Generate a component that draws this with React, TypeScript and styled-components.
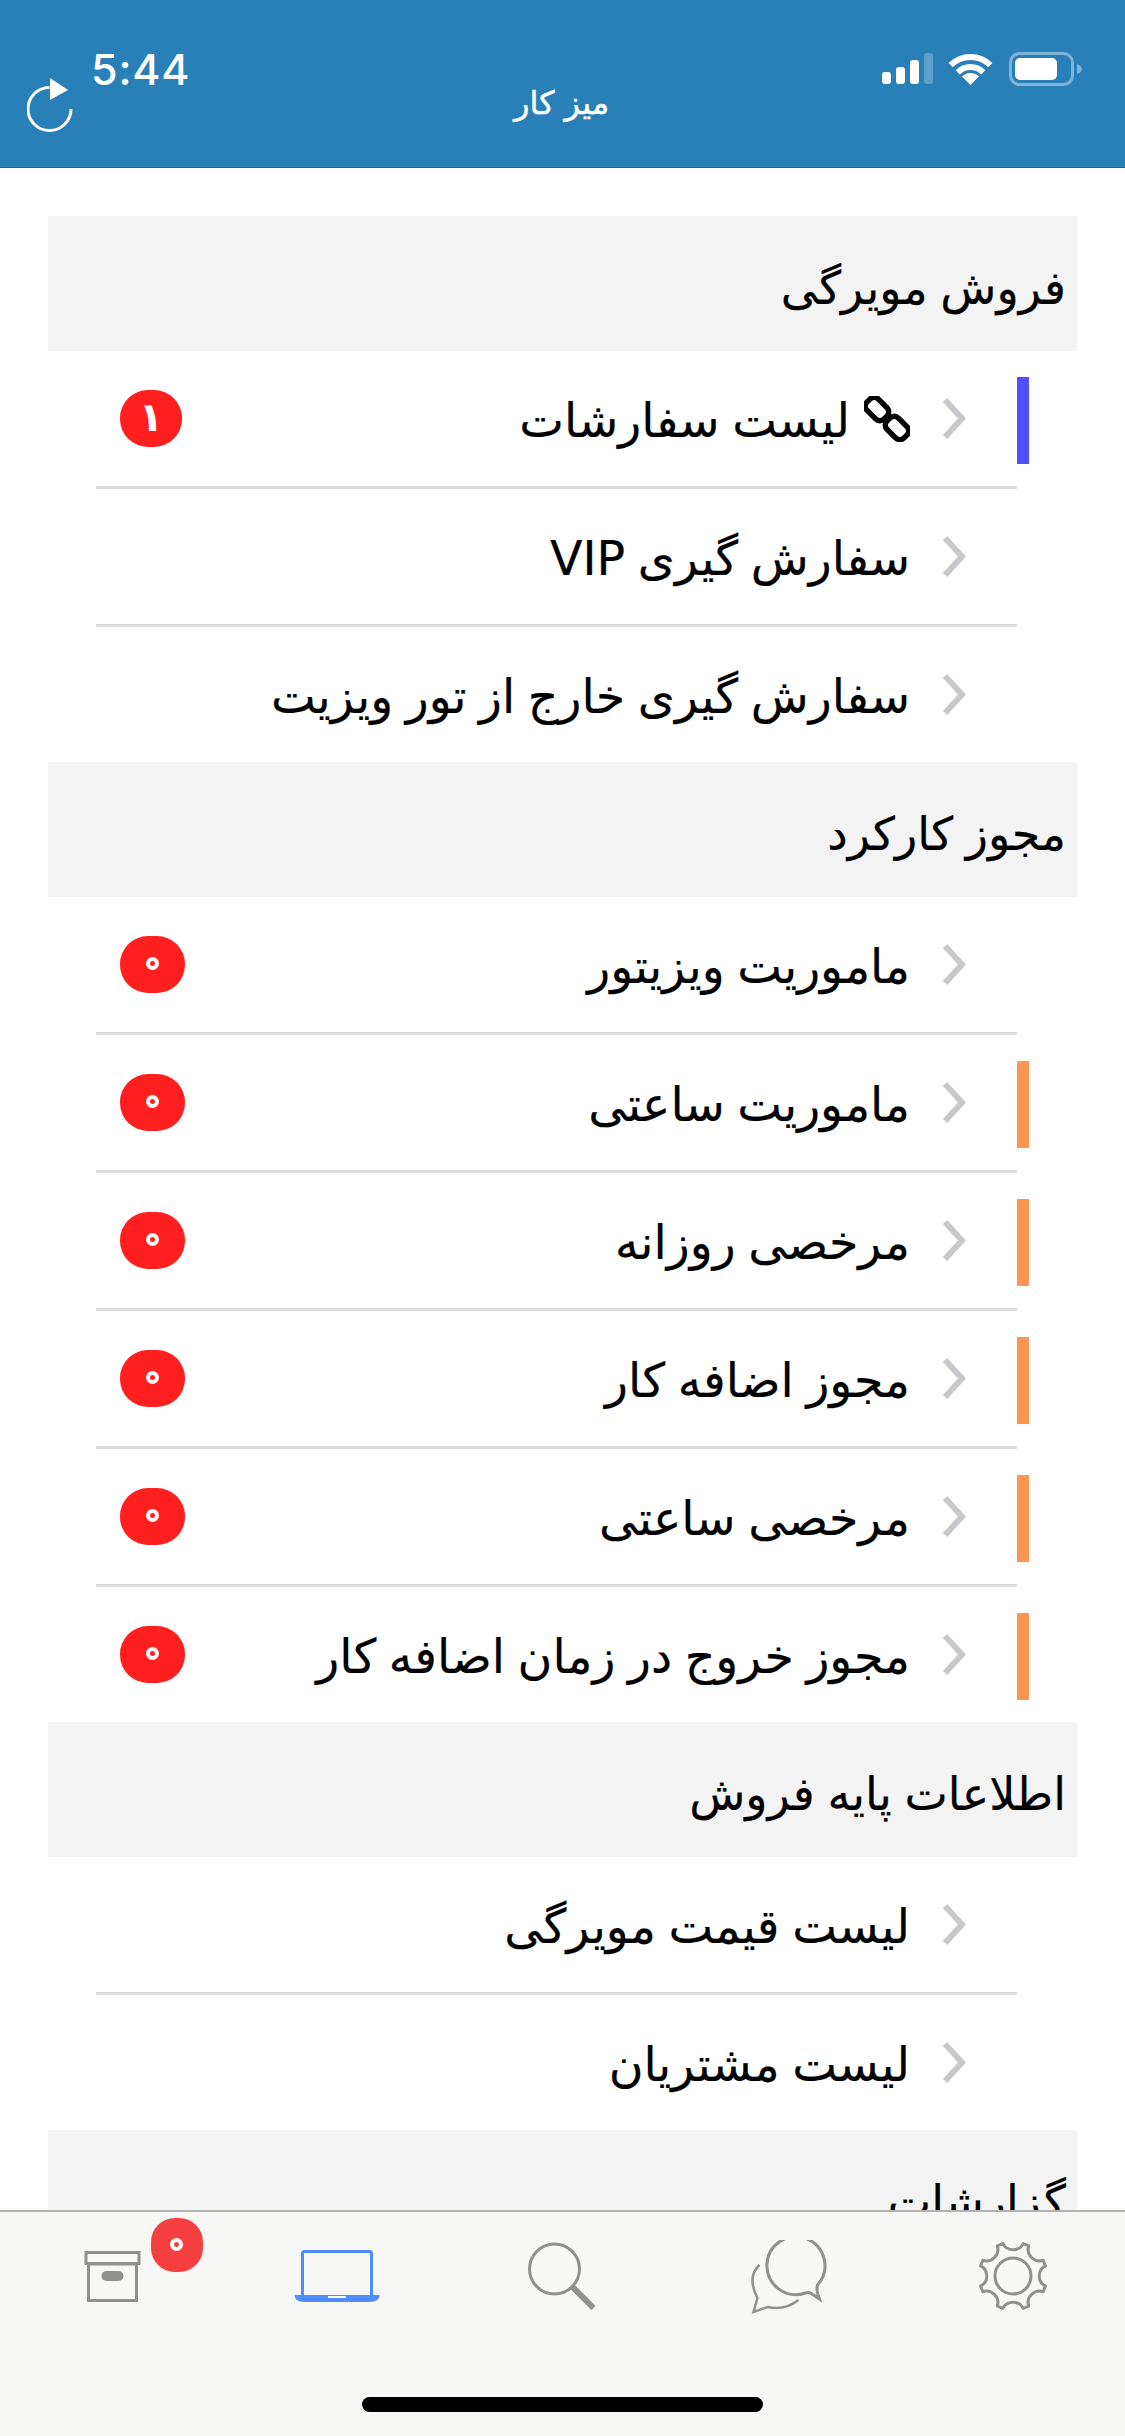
import styled, { createGlobalStyle } from "styled-components";

const GlobalStyle = createGlobalStyle`
  html, body {
    margin: 0;
    padding: 0;
    background: #fff;
  }
  body {
    font-family: "DejaVu Sans", "Noto Sans", sans-serif;
  }
`;

const Page = styled.div`
  width: 1125px;
  height: 2436px;
  display: flex;
  flex-direction: column;
  overflow: hidden;
`;

const Nav = styled.header`
  position: relative;
  flex: none;
  box-sizing: border-box;
  height: 168px;
  padding: 78px 0 0 27px;
  background: #2980b9;
  border-bottom: 1px solid #1f6493;
  display: grid;
  grid-template-columns: 1fr auto 1fr;
  align-items: start;
`;

const StatusBar = styled.div`
  position: absolute;
  top: 52px;
  left: 91px;
  right: 43px;
  display: flex;
  justify-content: space-between;
`;

const Clock = styled.span`
  font-family: "Inter", "Liberation Sans", sans-serif;
  font-size: 43px;
  font-weight: 500;
  line-height: 34px;
  letter-spacing: 0.8px;
  color: #fff;
`;

const NavTitle = styled.h1`
  margin: 0 29px 0 0;
  font-size: 32px;
  font-weight: 400;
  line-height: 50px;
  color: #fff;
  -webkit-text-stroke: 0.5px #fff;
`;

const Content = styled.main`
  flex: 1;
  min-height: 0;
  overflow: hidden;
  padding: 48px 48px 0;
`;

const SectionHeader = styled.h2`
  margin: 0;
  box-sizing: border-box;
  height: 135px;
  padding: 8px 11px 0 12px;
  background: #f3f3f3;
  direction: rtl;
  display: flex;
  align-items: center;
  font-size: 46px;
  font-weight: 400;
  word-spacing: -2px;
  color: #000;
  -webkit-text-stroke: 0.2px #000;
`;

const Row = styled.div`
  display: flex;
  direction: rtl;
  padding: 0 48px;
`;

const Marker = styled.span<{ $tone?: string }>`
  flex: none;
  width: 12px;
  height: 87px;
  margin-top: 26px;
  background: ${(p) => p.$tone || "transparent"};
`;

const RowBody = styled.div<{ $last: boolean }>`
  flex: 1;
  box-sizing: border-box;
  height: ${(p) => (p.$last ? "135px" : "138px")};
  padding: 0 51px 0 24px;
  border-bottom: ${(p) => (p.$last ? "none" : "3px solid #dcdcdc")};
  display: flex;
  align-items: center;
`;

const Chevron = styled.svg`
  flex: none;
  width: 24px;
  height: 41px;
  margin-left: 32px;
`;

const LinkIcon = styled.svg`
  flex: none;
  width: 46px;
  height: 46px;
  margin-left: 14px;
`;

const Label = styled.span`
  margin-top: 5px;
  font-size: 47.5px;
  line-height: 60px;
  word-spacing: -2.5px;
  color: #000;
  white-space: nowrap;
  -webkit-text-stroke: 0.2px #000;
`;

// the zero is drawn as a ring, the way the app's font shapes it
const Count = styled.span<{ $zero: boolean }>`
  position: relative;
  flex: none;
  margin-right: auto;
  box-sizing: border-box;
  width: ${(p) => (p.$zero ? "65px" : "62px")};
  height: 57px;
  border-radius: 28px;
  background: #ff1f1f;
  color: ${(p) => (p.$zero ? "transparent" : "#fff")};
  font-size: 40px;
  font-weight: 700;
  line-height: 54px;
  text-align: center;

  &::after {
    content: "";
    display: ${(p) => (p.$zero ? "block" : "none")};
    position: absolute;
    top: 21px;
    left: 26px;
    box-sizing: border-box;
    width: 13px;
    height: 13px;
    border: 4.5px solid #fff;
    border-radius: 50%;
  }
`;

const TabBar = styled.footer`
  flex: none;
  box-sizing: border-box;
  height: 226px;
  border-top: 2px solid #b2b2b2;
  background: #f7f7f5;
  display: flex;
  flex-direction: column;
  align-items: center;
`;

const Tabs = styled.nav`
  align-self: stretch;
  height: 185px;
  padding-top: 28px;
  box-sizing: border-box;
  display: grid;
  grid-template-columns: repeat(5, 1fr);
`;

const Tab = styled.div`
  position: relative;
  display: flex;
  justify-content: center;
  align-items: flex-start;
`;

const TabIcon = styled.svg`
  width: 100px;
  height: 80px;
`;

const TabBadge = styled.span`
  position: absolute;
  top: -22px;
  left: 151px;
  width: 52px;
  height: 54px;
  border-radius: 24px;
  background: #f64040;
  color: transparent;
  font-size: 28px;
  font-weight: 700;
  line-height: 54px;
  text-align: center;

  &::after {
    content: "";
    position: absolute;
    top: 20px;
    left: 19px;
    box-sizing: border-box;
    width: 13px;
    height: 13px;
    border: 4.5px solid #fff;
    border-radius: 50%;
  }
`;

const HomeIndicator = styled.div`
  width: 401px;
  height: 15px;
  border-radius: 8px;
  background: #000;
`;

type Item = { label: string; count?: string; tone?: string; link?: boolean };
type Section = { title: string; items: Item[] };

const ORANGE = "#ff9650";

const sections: Section[] = [
  {
    title: "فروش مویرگی",
    items: [
      { label: "لیست سفارشات", count: "۱", tone: "#5050ff", link: true },
      { label: "سفارش گیری VIP" },
      { label: "سفارش گیری خارج از تور ویزیت" },
    ],
  },
  {
    title: "مجوز کارکرد",
    items: [
      { label: "ماموریت ویزیتور", count: "۰" },
      { label: "ماموریت ساعتی", count: "۰", tone: ORANGE },
      { label: "مرخصی روزانه", count: "۰", tone: ORANGE },
      { label: "مجوز اضافه کار", count: "۰", tone: ORANGE },
      { label: "مرخصی ساعتی", count: "۰", tone: ORANGE },
      { label: "مجوز خروج در زمان اضافه کار", count: "۰", tone: ORANGE },
    ],
  },
  {
    title: "اطلاعات پایه فروش",
    items: [{ label: "لیست قیمت مویرگی" }, { label: "لیست مشتریان" }],
  },
  { title: "گزارشات", items: [] },
];

// blunt teeth of the settings gear, joined by arcs that bow toward the hub
const gearPath = () => {
  const polar = (deg: number) => {
    const a = (deg * Math.PI) / 180;
    return `${(50 + 34 * Math.cos(a)).toFixed(1)} ${(36 + 34 * Math.sin(a)).toFixed(1)}`;
  };
  let d = "";
  for (let i = 0; i < 8; i++) {
    const tooth = 22.5 + i * 45;
    d += `${i === 0 ? "M" : "L"}${polar(tooth - 5)}L${polar(tooth + 5)}A11.5 11.5 0 0 0 ${polar(tooth + 40)}`;
  }
  return d + "Z";
};

const App = () => {
  return (
    <Page>
      <GlobalStyle />
      <Nav>
        <StatusBar>
          <Clock>5:44</Clock>
          <svg width="200" height="34" viewBox="0 0 200 34">
            <g fill="#fff">
              <rect x="0" y="20" width="9" height="12" rx="3" />
              <rect x="14" y="15" width="9" height="17" rx="3" />
              <rect x="28" y="8" width="9" height="24" rx="3" />
              <rect x="42" y="1" width="9" height="31" rx="3" opacity="0.25" />
              <path d="M88.5 33l-8.5-8.5a12 12 0 0 1 17 0z" />
            </g>
            <g fill="none" stroke="#fff" strokeWidth="6">
              <path d="M75.8 20.3a18 18 0 0 1 25.4 0" />
              <path d="M68.7 13.2a28 28 0 0 1 39.6 0" />
            </g>
            <rect x="128.5" y="1.5" width="62" height="31" rx="9" fill="none" stroke="#fff" strokeWidth="3" opacity="0.4" />
            <rect x="133" y="6" width="42" height="22" rx="5" fill="#fff" />
            <path d="M195 12c3 1 5 3 5 5s-2 4-5 5z" fill="#fff" opacity="0.4" />
          </svg>
        </StatusBar>
        <svg width="46" height="56" viewBox="0 0 46 56">
          <path d="M44 31a21.5 21.5 0 1 1-21.5-21.5" fill="none" stroke="#fff" strokeWidth="3" />
          <path d="M23 0l18 12-18 10z" fill="#fff" />
        </svg>
        <NavTitle>میز کار</NavTitle>
      </Nav>

      <Content>
        {sections.map((section) => (
          <section key={section.title}>
            <SectionHeader>{section.title}</SectionHeader>
            {section.items.map((item, i) => (
              <Row key={item.label}>
                <Marker $tone={item.tone} />
                <RowBody $last={i === section.items.length - 1}>
                  <Chevron viewBox="0 0 24 41">
                    <path d="M3 2l17 18.5L3 39" fill="none" stroke="#c8c8cc" strokeWidth="6" />
                  </Chevron>
                  {item.link && (
                    <LinkIcon viewBox="0 0 46 46">
                      <g fill="none" stroke="#000" strokeWidth="5.5">
                        <rect x="1" y="5" width="24" height="16" rx="6" transform="rotate(45 13 13)" />
                        <rect x="21" y="24" width="24" height="16" rx="6" transform="rotate(45 33 32)" />
                      </g>
                    </LinkIcon>
                  )}
                  <Label>{item.label}</Label>
                  {item.count && <Count $zero={item.count === "۰"}>{item.count}</Count>}
                </RowBody>
              </Row>
            ))}
          </section>
        ))}
      </Content>

      <TabBar>
        <Tabs>
          <Tab>
            <TabIcon viewBox="0 0 100 80">
              <g fill="none" stroke="#909090" strokeWidth="3">
                <rect x="23" y="12.5" width="53" height="11" />
                <rect x="25.5" y="24" width="48" height="36.5" />
              </g>
              <rect x="38.5" y="31" width="22" height="10" rx="5" fill="#909090" />
            </TabIcon>
            <TabBadge>۰</TabBadge>
          </Tab>
          <Tab>
            <TabIcon viewBox="0 0 100 80">
              <path d="M14.5 57V13.5q0-2 2-2h65q2 0 2 2V57" fill="none" stroke="#4d8dff" strokeWidth="3" />
              <path d="M6.5 55h85q0 7-10 7h-65q-10 0-10-7z" fill="#4d8dff" />
              <rect x="40" y="56" width="18" height="2" fill="#fff" />
            </TabIcon>
          </Tab>
          <Tab>
            <TabIcon viewBox="0 0 100 80">
              <circle cx="41.5" cy="29" r="25" fill="none" stroke="#909090" strokeWidth="3" />
              <path d="M59.5 47l21 21" stroke="#909090" strokeWidth="6" />
            </TabIcon>
          </Tab>
          <Tab>
            <TabIcon viewBox="0 0 100 80">
              <g fill="none" stroke="#909090" strokeWidth="3">
                <path d="M79.5 45a29 29 0 1 0-12 8q3-1 5 0l9 6-2-6q-1-4 0-8z" />
                <path d="M21.5 25q-13 12-2 33l-4 14 14-5q17 4 31-7" strokeWidth="2.5" />
              </g>
            </TabIcon>
          </Tab>
          <Tab>
            <TabIcon viewBox="0 0 100 80">
              <g fill="none" stroke="#909090" strokeWidth="3" strokeLinejoin="round">
                <path d={gearPath()} />
                <circle cx="50" cy="36" r="18" />
              </g>
            </TabIcon>
          </Tab>
        </Tabs>
        <HomeIndicator />
      </TabBar>
    </Page>
  );
};

export default App;
